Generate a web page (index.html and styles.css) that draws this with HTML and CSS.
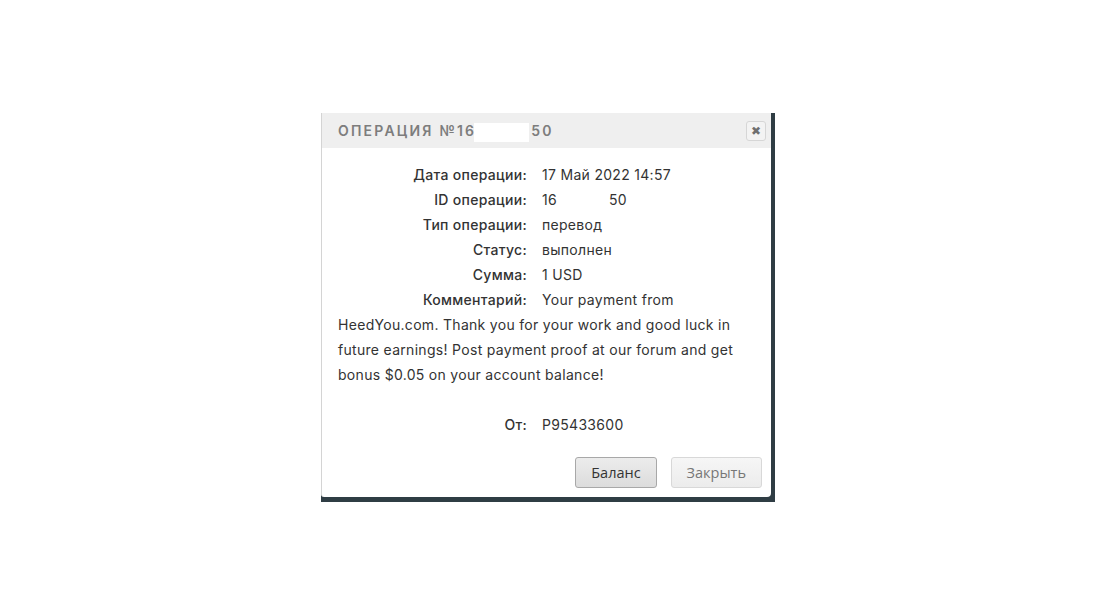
FILE: index.html
```html
<!DOCTYPE html>
<html lang="ru">
<head>
    <meta charset="UTF-8">
    <meta name="viewport" content="width=device-width, initial-scale=1.0">
    <title>Операция</title>
    <link rel="stylesheet" href="styles.css">
</head>
<body>
    <div class="page">
        <div class="frame">
            <div class="dialog">
                <div class="dialog-title">
                    <span class="title-text">Операция №16<span class="mask"></span>50</span>
                    <button class="close-btn" title="Закрыть">&#10006;</button>
                </div>

                <div class="dialog-body">
                    <div class="row"><span class="label">Дата операции:</span><span class="value">17 Май 2022 14:57</span></div>
                    <div class="row"><span class="label">ID операции:</span><span class="value">16<span class="gap"></span>50</span></div>
                    <div class="row"><span class="label">Тип операции:</span><span class="value">перевод</span></div>
                    <div class="row"><span class="label">Статус:</span><span class="value">выполнен</span></div>
                    <div class="row"><span class="label">Сумма:</span><span class="value">1 USD</span></div>
                    <div class="row"><span class="label">Комментарий:</span><span class="value">Your payment from HeedYou.com. Thank you for your work and good luck in future earnings! Post payment proof at our forum and get bonus $0.05 on your account balance!</span></div>
                    <div class="row empty"></div>
                    <div class="row"><span class="label">От:</span><span class="value">P95433600</span></div>
                </div>

                <div class="dialog-buttons">
                    <button class="btn">Баланс</button>
                    <button class="btn btn-light">Закрыть</button>
                </div>
            </div>
        </div>
    </div>
</body>
</html>
```

FILE: styles.css
```css
body {
    margin: 0;
    background-color: #fff;
    font-family: "Inter", "Liberation Sans", sans-serif;
}
.page {
    padding: 113px 0 0 321px;
}
.frame {
    display: inline-block;
    background-color: #2f3d44;
    padding: 0 4px 5px 0;
}
.dialog {
    width: 449px;
    height: 384px;
    background-color: #fff;
    border-left: 1px solid #d4d4d4;
    border-radius: 0 0 4px 3px;
    display: flex;
    flex-direction: column;
}
.dialog-title {
    height: 35px;
    background-color: #efefef;
    display: flex;
    align-items: center;
    justify-content: space-between;
    padding: 0 5px 0 16px;
}
.title-text {
    font-weight: 600;
    font-size: 14px;
    letter-spacing: 2.2px;
    text-transform: uppercase;
    color: #7d7d7d;
    display: flex;
    align-items: center;
}
.mask {
    flex: none;
    display: inline-block;
    width: 55px;
    height: 19px;
    background-color: #fff;
    margin: 3px 2px 0 -2px;
}
.close-btn {
    width: 20px;
    height: 20px;
    padding: 0;
    border: 1px solid #d6d6d6;
    border-radius: 3px;
    background-color: #f3f3f3;
    color: #6f6f6f;
    font-size: 12px;
    font-weight: 700;
    line-height: 18px;
    font-family: "DejaVu Sans", sans-serif;
}
.dialog-body {
    flex: 1;
    padding: 14px 16px 0 16px;
    font-size: 14px;
    letter-spacing: 0.3px;
    line-height: 25px;
    color: #333;
}
.row.empty {
    height: 25px;
}
.label {
    display: inline-block;
    width: 189px;
    text-align: right;
    margin-right: 15px;
    font-weight: 500;
}
.gap {
    display: inline-block;
    width: 52px;
}
.dialog-buttons {
    display: flex;
    justify-content: flex-end;
    gap: 14px;
    padding: 0 9px 9px 0;
}
.btn {
    height: 31px;
    padding: 0 15px;
    font-family: "Open Sans", "Liberation Sans", sans-serif;
    font-size: 14.5px;
    color: #333;
    border: 1px solid #a8a8a8;
    border-radius: 3px;
    background: linear-gradient(#ececec, #dcdcdc);
}
.btn-light {
    color: #777;
    border-color: #d8d8d8;
    background: linear-gradient(#f6f6f6, #ececec);
}
```
